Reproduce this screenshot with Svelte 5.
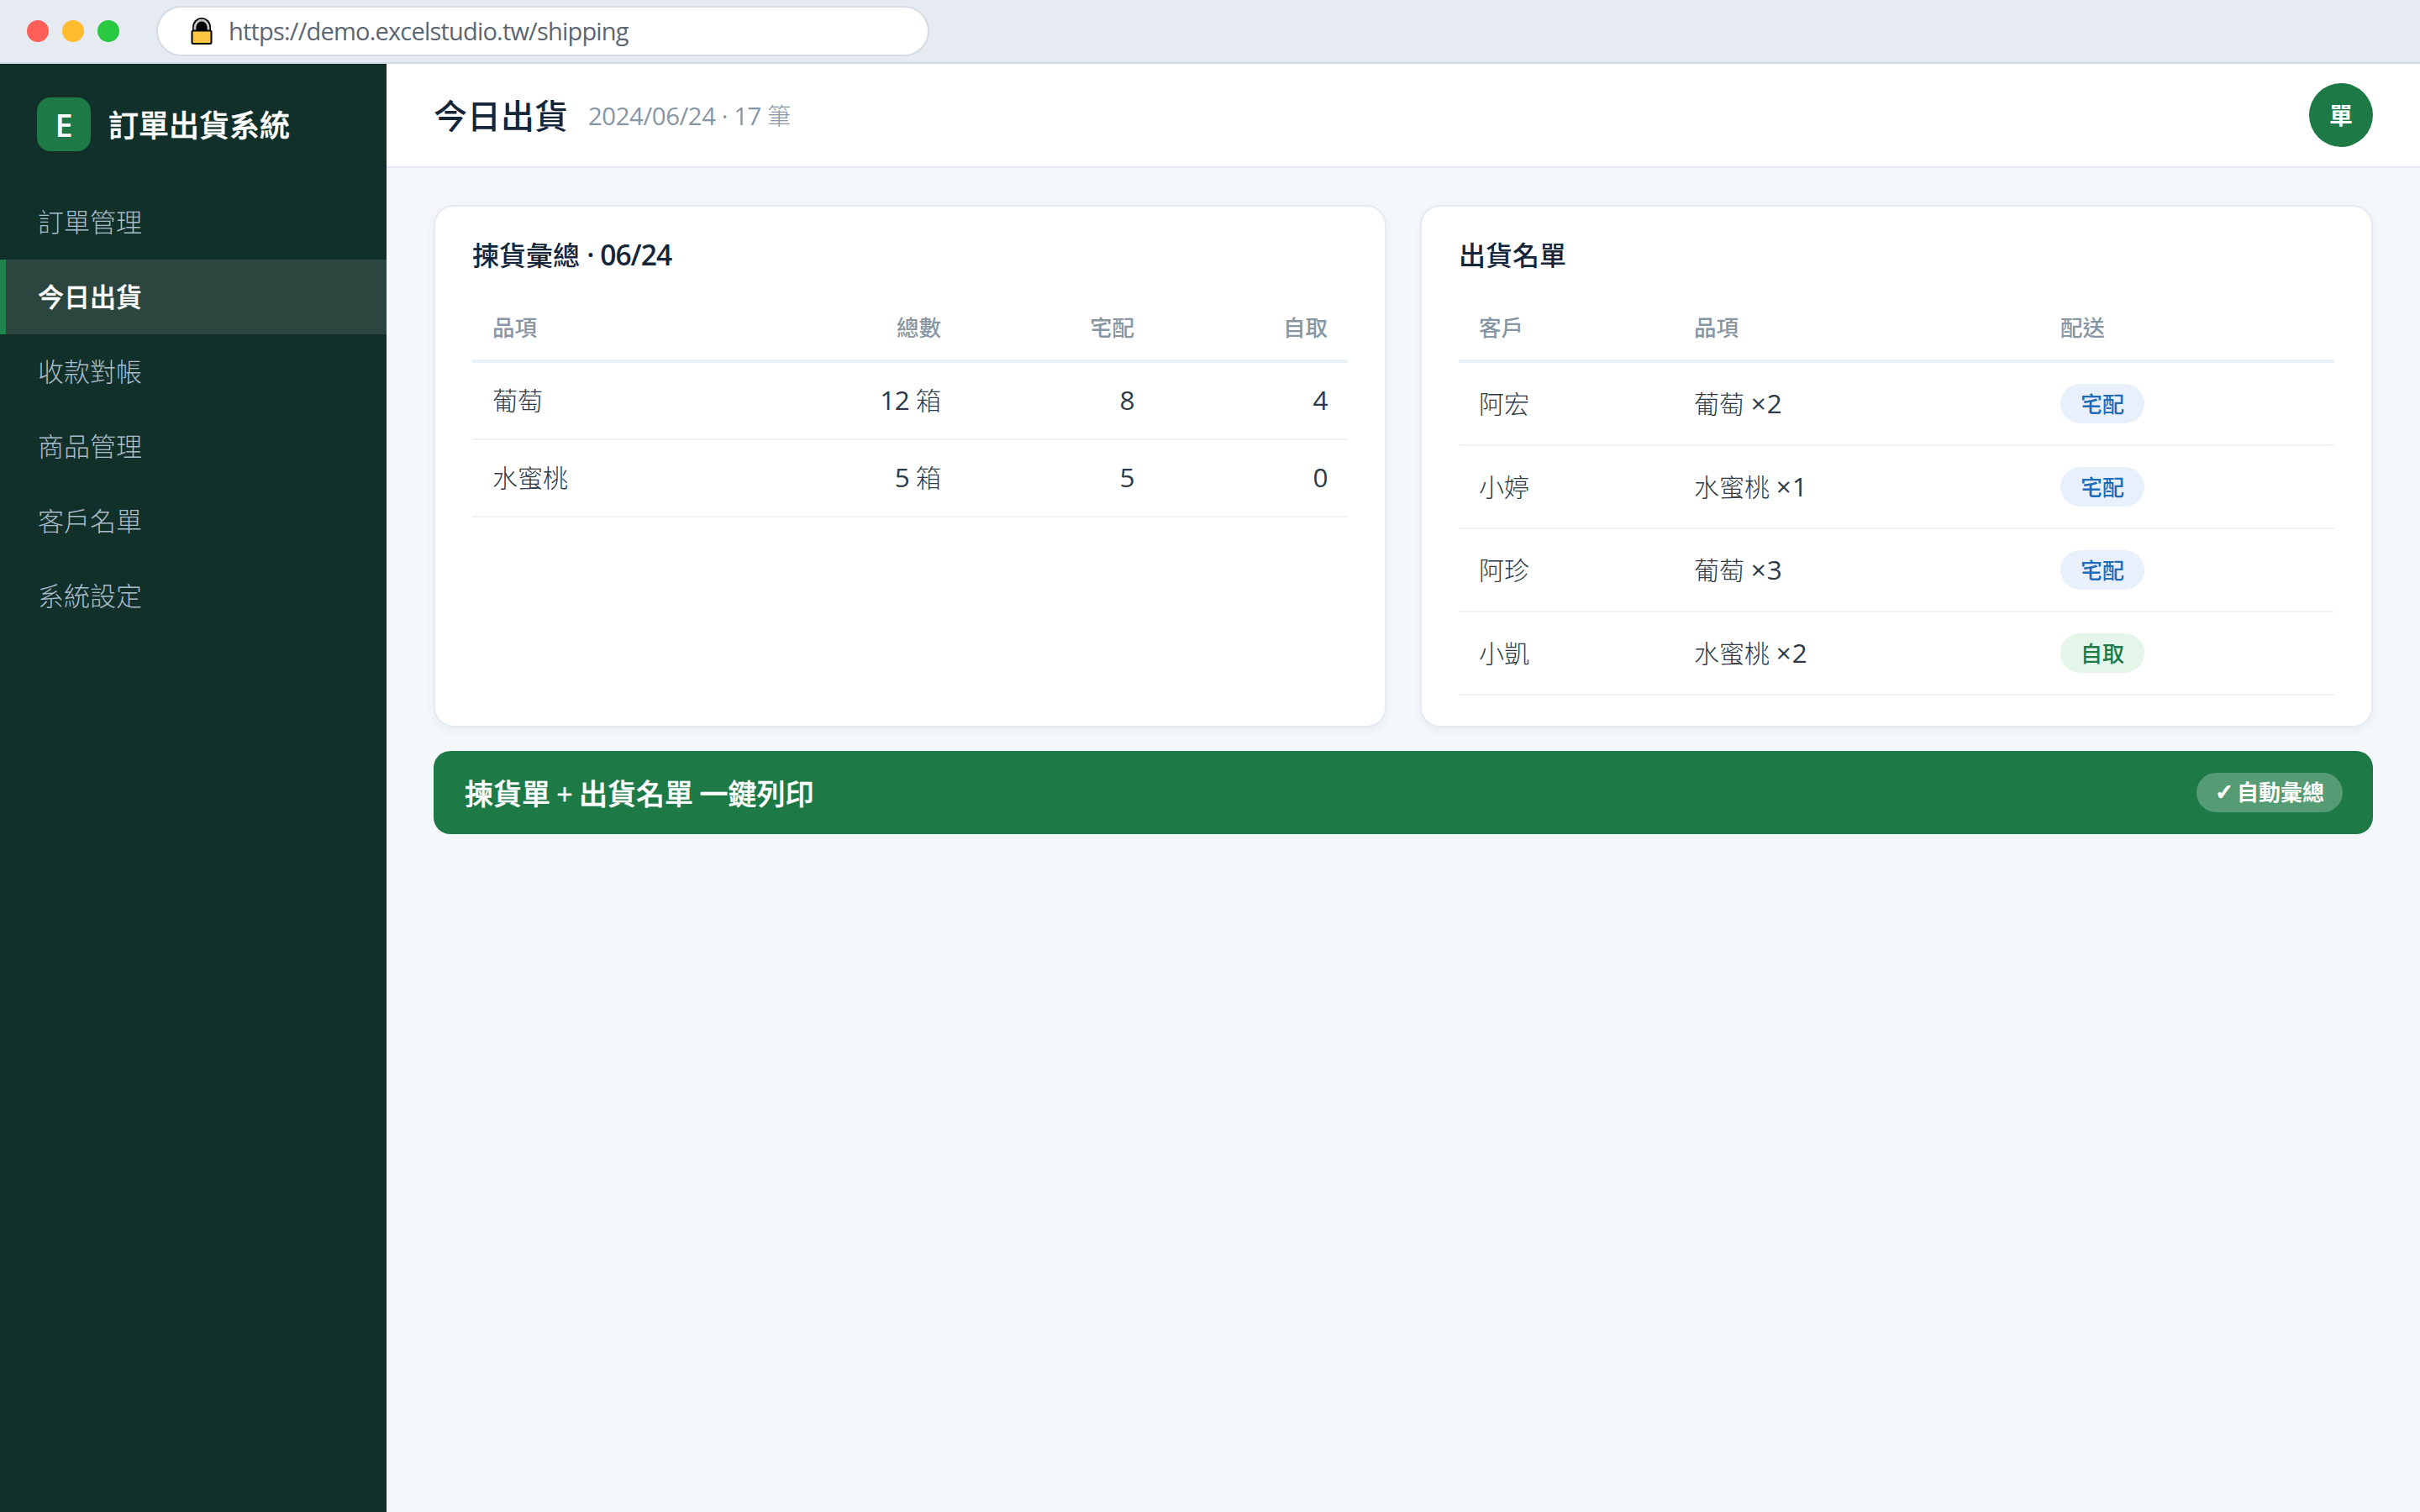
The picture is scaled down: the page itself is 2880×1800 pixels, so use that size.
<script lang="js">
const url = 'https://demo.excelstudio.tw/shipping';

const navItems = [
	{ label: '訂單管理' },
	{ label: '今日出貨', active: true },
	{ label: '收款對帳' },
	{ label: '商品管理' },
	{ label: '客戶名單' },
	{ label: '系統設定' },
];

const summary = [
	{ item: '葡萄', total: 12, delivery: 8, pickup: 4 },
	{ item: '水蜜桃', total: 5, delivery: 5, pickup: 0 },
];

const shipments = [
	{ customer: '阿宏', item: '葡萄', qty: 2, method: '宅配' },
	{ customer: '小婷', item: '水蜜桃', qty: 1, method: '宅配' },
	{ customer: '阿珍', item: '葡萄', qty: 3, method: '宅配' },
	{ customer: '小凱', item: '水蜜桃', qty: 2, method: '自取' },
];
</script>

<div class="window">
	<div class="titlebar">
		<div class="dots">
			<span class="dot red"></span>
			<span class="dot yellow"></span>
			<span class="dot green"></span>
		</div>
		<div class="address">
			<svg class="lock" viewBox="0 0 26 32" width="26" height="32">
				<path d="M2 17V11.500a11 11.500 0 0 1 22 0V17Z" fill="#000" />
				<path d="M5 15.500V12a8 9 0 0 1 16 0v3.500" fill="none" stroke="#c2c2c2" stroke-width="2.800" />
				<rect x="1.500" y="15.500" width="23" height="15.500" rx="1.500" fill="#fdc544" stroke="#000" stroke-width="2" />
			</svg>
			<span class="url">{url}</span>
		</div>
	</div>

	<div class="app">
		<aside class="sidebar">
			<div class="brand">
				<div class="logo">E</div>
				<div class="brand-name">訂單出貨系統</div>
			</div>
			<nav>
				{#each navItems as item}
					<div class="nav-item" class:active={item.active}>{item.label}</div>
				{/each}
			</nav>
		</aside>

		<main>
			<header class="topbar">
				<h1>今日出貨</h1>
				<div class="sub"><span class="latin">2024/06/24 · 17</span> 筆</div>
				<div class="avatar">單</div>
			</header>

			<div class="content">
				<div class="cards">
					<section class="card">
						<h2>揀貨彙總 <span class="latin">· 06/24</span></h2>
						<table>
							<colgroup>
								<col />
								<col class="col-num" />
								<col class="col-num" />
								<col class="col-num" />
							</colgroup>
							<thead>
								<tr>
									<th>品項</th>
									<th class="num">總數</th>
									<th class="num">宅配</th>
									<th class="num">自取</th>
								</tr>
							</thead>
							<tbody>
								{#each summary as row}
									<tr>
										<td>{row.item}</td>
										<td class="num"><span class="latin">{row.total}</span> 箱</td>
										<td class="num"><span class="latin">{row.delivery}</span></td>
										<td class="num"><span class="latin">{row.pickup}</span></td>
									</tr>
								{/each}
							</tbody>
						</table>
					</section>

					<section class="card">
						<h2>出貨名單</h2>
						<table class="shipments">
							<colgroup>
								<col class="col-customer" />
								<col class="col-item" />
								<col />
							</colgroup>
							<thead>
								<tr>
									<th>客戶</th>
									<th>品項</th>
									<th>配送</th>
								</tr>
							</thead>
							<tbody>
								{#each shipments as row}
									<tr>
										<td>{row.customer}</td>
										<td>{row.item} <span class="latin qty">×{row.qty}</span></td>
										<td><span class="tag" class:pickup={row.method === '自取'}>{row.method}</span></td>
									</tr>
								{/each}
							</tbody>
						</table>
					</section>
				</div>

				<div class="banner">
					<span class="banner-text">揀貨單 + 出貨名單 一鍵列印</span>
					<span class="banner-tag"><span class="check">✓</span>自動彙總</span>
				</div>
			</div>
		</main>
	</div>
</div>

<style>
	:global(body) {
		margin: 0;
		background: #f4f8fb;
	}
	.window {
		display: flex;
		flex-direction: column;
		height: 1800px;
		overflow: hidden;
		font-family: 'Open Sans', 'Noto Sans CJK TC', sans-serif;
		font-weight: 300;
		color: #2d3a47;
	}
	/* Latin runs are a touch larger and heavier than the Chinese around them */
	.latin {
		font-size: 1.05em;
		font-weight: 400;
		line-height: 1;
		letter-spacing: -0.015em;
	}

	/* Browser chrome */
	.titlebar {
		display: flex;
		align-items: center;
		gap: 44px;
		box-sizing: border-box;
		height: 76px;
		padding: 0 32px;
		background: #e6eaf1;
		border-bottom: 2px solid #d3dae6;
	}
	.dots {
		display: flex;
		gap: 16px;
	}
	.dot {
		width: 26px;
		height: 26px;
		border-radius: 50%;
	}
	.red {
		background: #ff5f57;
	}
	.yellow {
		background: #febc2e;
	}
	.green {
		background: #28c840;
	}
	.address {
		display: flex;
		align-items: center;
		gap: 19px;
		box-sizing: border-box;
		width: 920px;
		height: 60px;
		padding: 0 39px;
		background: #fff;
		border: 2px solid #d6dce5;
		border-radius: 30px;
	}
	.lock {
		flex-shrink: 0;
	}
	.url {
		padding-bottom: 2px;
		font-size: 29px;
		font-weight: 400;
		letter-spacing: -0.8px;
		color: #5b6672;
	}

	.app {
		display: flex;
		flex: 1;
	}

	/* Sidebar */
	.sidebar {
		flex-shrink: 0;
		width: 460px;
		background: #12302a;
	}
	.brand {
		display: flex;
		align-items: center;
		gap: 21px;
		padding: 40px 44px 40px;
	}
	.logo {
		display: flex;
		align-items: center;
		justify-content: center;
		width: 64px;
		height: 64px;
		border-radius: 16px;
		background: #1d7a46;
		color: #fff;
		font-size: 38px;
		font-weight: 600;
	}
	.brand-name {
		padding-top: 3px;
		font-size: 36px;
		font-weight: 500;
		line-height: 48px;
		color: #fff;
		-webkit-text-stroke: 0.4px #fff;
	}
	.nav-item {
		box-sizing: border-box;
		height: 89px;
		padding-left: 38px;
		border-left: 7px solid transparent;
		font-size: 31px;
		line-height: 89px;
		color: #a9bccb;
	}
	.nav-item.active {
		background: #2c463f;
		border-left-color: #1d8549;
		color: #fff;
		font-weight: 500;
		-webkit-text-stroke: 0.3px #fff;
	}

	/* Header */
	main {
		flex: 1;
		background: #f4f8fb;
	}
	.topbar {
		display: flex;
		align-items: center;
		box-sizing: border-box;
		height: 124px;
		padding: 0 56px;
		background: #fff;
		border-bottom: 2px solid #e5e9f1;
	}
	h1 {
		margin: 0;
		padding-top: 2px;
		font-size: 40px;
		font-weight: 500;
		line-height: 54px;
		color: #15253a;
	}
	.sub {
		margin-left: 24px;
		padding-top: 2px;
		font-size: 28px;
		line-height: 38px;
		color: #8796a3;
	}
	.avatar {
		display: flex;
		align-items: center;
		justify-content: center;
		width: 76px;
		height: 76px;
		margin-left: auto;
		border-radius: 50%;
		background: #1d7a46;
		color: #fff;
		font-size: 28px;
		font-weight: 700;
		line-height: 36px;
	}

	/* Cards */
	.content {
		display: flex;
		flex-direction: column;
		gap: 28px;
		padding: 44px 56px;
	}
	.cards {
		display: grid;
		grid-template-columns: 1fr 1fr;
		gap: 40px;
	}
	.card {
		box-sizing: border-box;
		height: 622px;
		padding: 36px 44px;
		background: #fff;
		border: 2px solid #e6eaf1;
		border-radius: 24px;
		box-shadow: 0 4px 12px rgba(20, 40, 80, 0.05);
	}
	h2 {
		margin: 0 0 28px;
		font-size: 32px;
		font-weight: 500;
		line-height: 43px;
		color: #15253a;
	}
	h2 .latin {
		font-weight: 600;
		letter-spacing: -0.03em;
	}
	table {
		width: 100%;
		table-layout: fixed;
		border-collapse: separate;
		border-spacing: 0;
	}
	.col-num {
		width: 230px;
	}
	.col-customer {
		width: 256px;
	}
	.col-item {
		width: 436px;
	}
	th,
	td {
		box-sizing: border-box;
		padding: 0 24px;
		text-align: left;
		vertical-align: middle;
	}
	th {
		height: 79px;
		border-bottom: 4px solid #ebf1f5;
		font-size: 26.5px;
		font-weight: 500;
		line-height: 35px;
		color: #8796a3;
	}
	td {
		height: 92px;
		border-bottom: 2px solid #f0f3f6;
		font-size: 30px;
		line-height: 40px;
	}
	.shipments td {
		height: 99px;
	}
	.num {
		text-align: right;
	}
	.qty {
		letter-spacing: 0.03em;
	}
	.tag {
		display: inline-block;
		box-sizing: border-box;
		height: 47px;
		padding: 0 24px;
		border-radius: 24px;
		background: #e8f0fb;
		color: #1f6cb8;
		font-size: 26px;
		font-weight: 500;
		line-height: 48px;
		vertical-align: middle;
	}
	.tag.pickup {
		background: #e4f5ea;
		color: #1d7a46;
	}

	/* Print banner */
	.banner {
		display: flex;
		align-items: center;
		justify-content: space-between;
		box-sizing: border-box;
		height: 99px;
		padding: 0 36px 0 37px;
		border-radius: 20px;
		background: #1d7a46;
		color: #fff;
		font-size: 34px;
		font-weight: 500;
	}
	.banner-text {
		padding-bottom: 1px;
		word-spacing: -1.5px;
		-webkit-text-stroke: 0.4px #fff;
	}
	.banner-tag {
		display: flex;
		align-items: center;
		gap: 4px;
		padding: 6px 22px;
		border-radius: 24px;
		background: rgba(255, 255, 255, 0.25);
		font-size: 26px;
		font-weight: 700;
		line-height: 35px;
	}
	.check {
		font-family: 'DejaVu Sans', sans-serif;
		-webkit-text-stroke: 1.5px #fff;
	}
</style>
